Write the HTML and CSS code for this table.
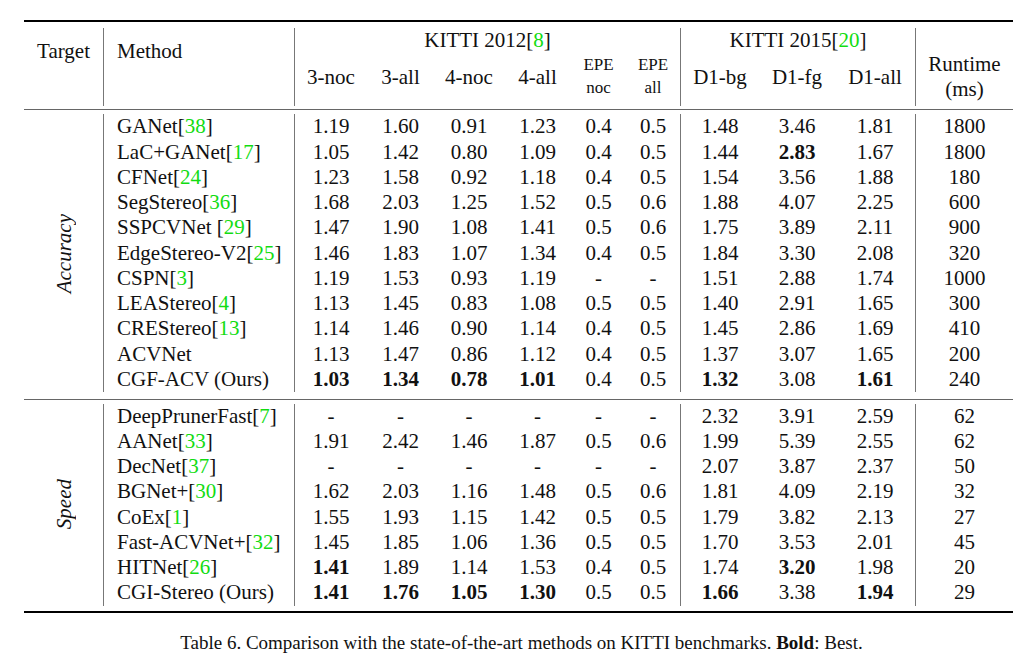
FILE: index.html
```html
<!DOCTYPE html>
<html>
<head>
<meta charset="utf-8">
<link rel="stylesheet" href="styles.css">
</head>
<body>
<div class="page">
  <div class="tbl">
    <div class="rule-thick"></div>
    <div class="head">
      <div class="h-target vl">Target</div>
      <div class="h-method vl">Method</div>
      <div class="h-k12 vl">KITTI 2012[<span class="cite">8</span>]</div>
      <div class="h-k15 vl">KITTI 2015[<span class="cite">20</span>]</div>
      <div class="h-sub">3-noc</div>
      <div class="h-sub">3-all</div>
      <div class="h-sub">4-noc</div>
      <div class="h-sub">4-all</div>
      <div class="h-small">EPE<br>noc</div>
      <div class="h-small vl">EPE<br>all</div>
      <div class="h-sub">D1-bg</div>
      <div class="h-sub">D1-fg</div>
      <div class="h-sub vl">D1-all</div>
      <div class="h-run">Runtime<br>(ms)</div>
    </div>
    <div class="rule-mid rm1"></div>
    <div class="section acc">
      <div class="side"><span class="vlabel">Accuracy</span></div>
      <div class="rows">
        <div class="row"><div class="m">GANet[<span class="cite">38</span>]</div><div>1.19</div><div>1.60</div><div>0.91</div><div>1.23</div><div>0.4</div><div class="vl">0.5</div><div>1.48</div><div>3.46</div><div class="vl">1.81</div><div>1800</div></div>
        <div class="row"><div class="m">LaC+GANet[<span class="cite">17</span>]</div><div>1.05</div><div>1.42</div><div>0.80</div><div>1.09</div><div>0.4</div><div class="vl">0.5</div><div>1.44</div><div><b>2.83</b></div><div class="vl">1.67</div><div>1800</div></div>
        <div class="row"><div class="m">CFNet[<span class="cite">24</span>]</div><div>1.23</div><div>1.58</div><div>0.92</div><div>1.18</div><div>0.4</div><div class="vl">0.5</div><div>1.54</div><div>3.56</div><div class="vl">1.88</div><div>180</div></div>
        <div class="row"><div class="m">SegStereo[<span class="cite">36</span>]</div><div>1.68</div><div>2.03</div><div>1.25</div><div>1.52</div><div>0.5</div><div class="vl">0.6</div><div>1.88</div><div>4.07</div><div class="vl">2.25</div><div>600</div></div>
        <div class="row"><div class="m">SSPCVNet [<span class="cite">29</span>]</div><div>1.47</div><div>1.90</div><div>1.08</div><div>1.41</div><div>0.5</div><div class="vl">0.6</div><div>1.75</div><div>3.89</div><div class="vl">2.11</div><div>900</div></div>
        <div class="row"><div class="m">EdgeStereo-V2[<span class="cite">25</span>]</div><div>1.46</div><div>1.83</div><div>1.07</div><div>1.34</div><div>0.4</div><div class="vl">0.5</div><div>1.84</div><div>3.30</div><div class="vl">2.08</div><div>320</div></div>
        <div class="row"><div class="m">CSPN[<span class="cite">3</span>]</div><div>1.19</div><div>1.53</div><div>0.93</div><div>1.19</div><div>-</div><div class="vl">-</div><div>1.51</div><div>2.88</div><div class="vl">1.74</div><div>1000</div></div>
        <div class="row"><div class="m">LEAStereo[<span class="cite">4</span>]</div><div>1.13</div><div>1.45</div><div>0.83</div><div>1.08</div><div>0.5</div><div class="vl">0.5</div><div>1.40</div><div>2.91</div><div class="vl">1.65</div><div>300</div></div>
        <div class="row"><div class="m">CREStereo[<span class="cite">13</span>]</div><div>1.14</div><div>1.46</div><div>0.90</div><div>1.14</div><div>0.4</div><div class="vl">0.5</div><div>1.45</div><div>2.86</div><div class="vl">1.69</div><div>410</div></div>
        <div class="row"><div class="m">ACVNet</div><div>1.13</div><div>1.47</div><div>0.86</div><div>1.12</div><div>0.4</div><div class="vl">0.5</div><div>1.37</div><div>3.07</div><div class="vl">1.65</div><div>200</div></div>
        <div class="row"><div class="m">CGF-ACV (Ours)</div><div><b>1.03</b></div><div><b>1.34</b></div><div><b>0.78</b></div><div><b>1.01</b></div><div>0.4</div><div class="vl">0.5</div><div><b>1.32</b></div><div>3.08</div><div class="vl"><b>1.61</b></div><div>240</div></div>
      </div>
    </div>
    <div class="rule-mid rm2"></div>
    <div class="section speed">
      <div class="side"><span class="vlabel">Speed</span></div>
      <div class="rows">
        <div class="row"><div class="m">DeepPrunerFast[<span class="cite">7</span>]</div><div>-</div><div>-</div><div>-</div><div>-</div><div>-</div><div class="vl">-</div><div>2.32</div><div>3.91</div><div class="vl">2.59</div><div>62</div></div>
        <div class="row"><div class="m">AANet[<span class="cite">33</span>]</div><div>1.91</div><div>2.42</div><div>1.46</div><div>1.87</div><div>0.5</div><div class="vl">0.6</div><div>1.99</div><div>5.39</div><div class="vl">2.55</div><div>62</div></div>
        <div class="row"><div class="m">DecNet[<span class="cite">37</span>]</div><div>-</div><div>-</div><div>-</div><div>-</div><div>-</div><div class="vl">-</div><div>2.07</div><div>3.87</div><div class="vl">2.37</div><div>50</div></div>
        <div class="row"><div class="m">BGNet+[<span class="cite">30</span>]</div><div>1.62</div><div>2.03</div><div>1.16</div><div>1.48</div><div>0.5</div><div class="vl">0.6</div><div>1.81</div><div>4.09</div><div class="vl">2.19</div><div>32</div></div>
        <div class="row"><div class="m">CoEx[<span class="cite">1</span>]</div><div>1.55</div><div>1.93</div><div>1.15</div><div>1.42</div><div>0.5</div><div class="vl">0.5</div><div>1.79</div><div>3.82</div><div class="vl">2.13</div><div>27</div></div>
        <div class="row"><div class="m">Fast-ACVNet+[<span class="cite">32</span>]</div><div>1.45</div><div>1.85</div><div>1.06</div><div>1.36</div><div>0.5</div><div class="vl">0.5</div><div>1.70</div><div>3.53</div><div class="vl">2.01</div><div>45</div></div>
        <div class="row"><div class="m">HITNet[<span class="cite">26</span>]</div><div><b>1.41</b></div><div>1.89</div><div>1.14</div><div>1.53</div><div>0.4</div><div class="vl">0.5</div><div>1.74</div><div><b>3.20</b></div><div class="vl">1.98</div><div>20</div></div>
        <div class="row"><div class="m">CGI-Stereo (Ours)</div><div><b>1.41</b></div><div><b>1.76</b></div><div><b>1.05</b></div><div><b>1.30</b></div><div>0.5</div><div class="vl">0.5</div><div><b>1.66</b></div><div>3.38</div><div class="vl"><b>1.94</b></div><div>29</div></div>
      </div>
    </div>
    <div class="rule-thick rb"></div>
  </div>
  <p class="caption">Table 6. Comparison with the state-of-the-art methods on KITTI benchmarks. <b>Bold</b>: Best.</p>
</div>
</body>
</html>
```

FILE: styles.css
```css
* { box-sizing: border-box; }
html, body { margin: 0; padding: 0; background: #fff; }
body {
  font-family: "Liberation Serif", "Times New Roman", serif;
  color: #111;
  font-size: 21px;
}
.page { width: 1024px; height: 664px; overflow: hidden; padding-top: 20px; }
.tbl { width: 989px; margin-left: 24px; }
.cite { color: #12dc12; }
b { font-weight: bold; }

.rule-thick { height: 2px; background: #000; }
.rule-mid { height: 1px; background: #666; }
.rm1 { margin-top: 3px; }
.rm2 { margin-top: 7px; }
.rb { margin-top: 5px; }

.vl { border-right: 1px solid #777; }

.head {
  margin-top: 6px;
  height: 78px;
  display: grid;
  grid-template-columns: 80px 191px 72px 67px 70px 67px 55px 55px 78px 76px 81px 97px;
  grid-template-rows: 24px 54px;
  line-height: 24px;
}
.h-target { grid-column: 1; grid-row: 1 / 3; text-align: center; padding-top: 11px; }
.h-method { grid-column: 2; grid-row: 1 / 3; padding-left: 13px; padding-top: 11px; }
.h-k12 { grid-column: 3 / 9; grid-row: 1; text-align: center; }
.h-k15 { grid-column: 9 / 12; grid-row: 1; text-align: center; }
.h-sub { grid-row: 2; text-align: center; padding-top: 13px; }
.h-small { grid-row: 2; text-align: center; font-size: 17px; line-height: 23px; padding-top: 1px; }
.h-run { grid-row: 2; grid-column: 12; text-align: center; line-height: 25px; }

.section { display: flex; }
.acc { margin-top: 4.4px; }
.speed { margin-top: 3.4px; }
.side {
  width: 80px;
  flex: none;
  border-right: 1px solid #777;
  display: flex;
  align-items: center;
  justify-content: center;
}
.vlabel {
  font-style: italic;
  writing-mode: vertical-rl;
  transform: rotate(180deg);
  line-height: 24px;
}
.rows { flex: 1; }
.row {
  display: grid;
  grid-template-columns: 191px 72px 67px 70px 67px 55px 55px 78px 76px 81px 97px;
  height: 25.25px;
  line-height: 25.25px;
  text-align: center;
}
.row .m { text-align: left; padding-left: 13px; border-right: 1px solid #777; white-space: nowrap; }

.caption {
  margin: 19px 0 0 0;
  font-size: 19px;
  line-height: 22px;
  text-align: center;
  padding-left: 19px;
  white-space: nowrap;
}
```
